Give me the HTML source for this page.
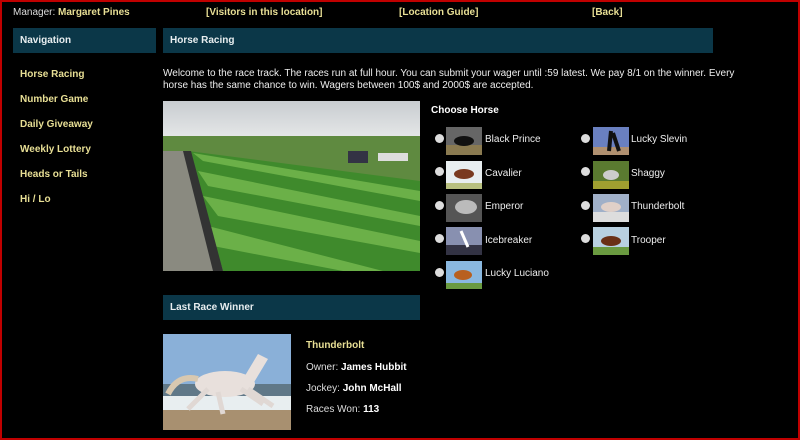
<!DOCTYPE html>
<html><head><style>
body{margin:0;width:800px;height:440px;background:#000;overflow:hidden;font-family:"Liberation Sans",Arial,sans-serif;font-size:10px;color:#ddd}
.frame{position:absolute;left:0;top:0;width:796px;height:436px;border:2px solid #c00000}
.a{position:absolute;white-space:nowrap}
.y{color:#e8df95;font-weight:bold}
.b{font-weight:bold;color:#fff}
.hdr{position:absolute;background:#0b3748;color:#e8eef0;font-weight:bold;font-size:10px;padding-left:7px;box-sizing:border-box;line-height:25px;height:25px}
.r{position:absolute;width:9px;height:9px;border-radius:50%;background:#ddd}
.t{position:absolute;width:36px;height:28px}
</style></head><body>
<div class="frame"></div>
<div class="a" style="left:13px;top:7px">Manager: <span class="y">Margaret Pines</span></div>
<div class="a y" style="left:206px;top:7px">[Visitors in this location]</div>
<div class="a y" style="left:399px;top:7px">[Location Guide]</div>
<div class="a y" style="left:592px;top:7px">[Back]</div>
<div class="hdr" style="left:13px;top:28px;width:143px">Navigation</div>
<div class="hdr" style="left:163px;top:28px;width:550px">Horse Racing</div>
<div class="a y" style="left:20px;top:69px">Horse Racing</div>
<div class="a y" style="left:20px;top:94px">Number Game</div>
<div class="a y" style="left:20px;top:119px">Daily Giveaway</div>
<div class="a y" style="left:20px;top:144px">Weekly Lottery</div>
<div class="a y" style="left:20px;top:169px">Heads or Tails</div>
<div class="a y" style="left:20px;top:194px">Hi / Lo</div>
<div class="a" style="left:163px;top:68px;line-height:12px;color:#eee">Welcome to the race track. The races run at full hour. You can submit your wager until :59 latest. We pay 8/1 on the winner. Every<br>horse has the same chance to win. Wagers between 100$ and 2000$ are accepted.</div>
<svg class="a" style="left:163px;top:101px" width="257" height="170">
<defs><linearGradient id="sk" x1="0" y1="0" x2="0" y2="1"><stop offset="0" stop-color="#c8ccd0"/><stop offset="1" stop-color="#e8eaea"/></linearGradient></defs>
<rect width="257" height="40" fill="url(#sk)"/>
<rect y="35" width="257" height="135" fill="#5f8a40"/>
<path d="M25 50 L257 80 L257 170 L60 170 Z" fill="#3f8a2c"/>
<path d="M30 52 L257 90 L257 100 L40 60 Z M35 70 L257 115 L257 125 L45 85 Z M40 95 L257 140 L257 152 L55 115 Z M45 125 L220 170 L180 170 L50 145 Z" fill="#6bb048"/>
<path d="M0 50 L25 50 L60 170 L0 170 Z" fill="#8a8a80"/>
<path d="M20 50 L28 50 L60 170 L50 170 Z" fill="#333"/>
<rect x="185" y="50" width="20" height="12" fill="#334"/><rect x="215" y="52" width="30" height="8" fill="#ddd"/>
</svg>
<div class="a b" style="left:431px;top:105px">Choose Horse</div>
<div class="r" style="left:435px;top:134px"></div><svg class="t" style="left:446px;top:127px"><rect width="36" height="28" fill="#8a7a50"/><rect width="36" height="18" fill="#666"/><ellipse cx="18" cy="14" rx="10" ry="5" fill="#111"/></svg><div class="a" style="left:485px;top:134px;color:#eee">Black Prince</div>
<div class="r" style="left:435px;top:167px"></div><svg class="t" style="left:446px;top:161px"><rect width="36" height="28" fill="#e8eef0"/><rect y="22" width="36" height="6" fill="#b8c080"/><ellipse cx="18" cy="13" rx="10" ry="5" fill="#7a3a20"/></svg><div class="a" style="left:485px;top:168px;color:#eee">Cavalier</div>
<div class="r" style="left:435px;top:201px"></div><svg class="t" style="left:446px;top:194px"><rect width="36" height="28" fill="#555"/><ellipse cx="20" cy="13" rx="11" ry="7" fill="#bbb"/></svg><div class="a" style="left:485px;top:201px;color:#eee">Emperor</div>
<div class="r" style="left:435px;top:234px"></div><svg class="t" style="left:446px;top:227px"><rect width="36" height="28" fill="#8890b0"/><rect y="18" width="36" height="10" fill="#334"/><path d="M15 4 L22 20" stroke="#fff" stroke-width="3"/></svg><div class="a" style="left:485px;top:235px;color:#eee">Icebreaker</div>
<div class="r" style="left:435px;top:268px"></div><svg class="t" style="left:446px;top:261px"><rect width="36" height="28" fill="#8ab8e0"/><rect y="22" width="36" height="6" fill="#6a9a40"/><ellipse cx="17" cy="14" rx="9" ry="5" fill="#b86020"/></svg><div class="a" style="left:485px;top:268px;color:#eee">Lucky Luciano</div>
<div class="r" style="left:581px;top:134px"></div><svg class="t" style="left:593px;top:127px"><rect width="36" height="28" fill="#6a80c0"/><rect y="20" width="36" height="8" fill="#b09070"/><path d="M18 4 L16 24 M20 6 L26 24" stroke="#111" stroke-width="4"/></svg><div class="a" style="left:631px;top:134px;color:#eee">Lucky Slevin</div>
<div class="r" style="left:581px;top:167px"></div><svg class="t" style="left:593px;top:161px"><rect width="36" height="28" fill="#5a7a30"/><rect y="20" width="36" height="8" fill="#a0a030"/><ellipse cx="18" cy="14" rx="8" ry="5" fill="#ccc"/></svg><div class="a" style="left:631px;top:168px;color:#eee">Shaggy</div>
<div class="r" style="left:581px;top:201px"></div><svg class="t" style="left:593px;top:194px"><rect width="36" height="28" fill="#a0b0c8"/><rect y="18" width="36" height="10" fill="#ddd"/><ellipse cx="18" cy="13" rx="10" ry="5" fill="#e0d0c8"/></svg><div class="a" style="left:631px;top:201px;color:#eee">Thunderbolt</div>
<div class="r" style="left:581px;top:234px"></div><svg class="t" style="left:593px;top:227px"><rect width="36" height="28" fill="#b8d0e0"/><rect y="20" width="36" height="8" fill="#6a9a40"/><ellipse cx="18" cy="14" rx="10" ry="5" fill="#6a3015"/></svg><div class="a" style="left:631px;top:235px;color:#eee">Trooper</div>
<div class="hdr" style="left:163px;top:295px;width:257px">Last Race Winner</div>
<svg class="a" style="left:163px;top:334px" width="128" height="96">
<rect width="128" height="50" fill="#8ab0d8"/><rect y="50" width="128" height="20" fill="#607888"/><rect y="62" width="128" height="14" fill="#e8eef0"/><rect y="76" width="128" height="20" fill="#a89070"/>
<ellipse cx="62" cy="50" rx="30" ry="13" fill="#e8e0dc"/><path d="M80 45 L95 20 L105 25 L90 50 Z" fill="#e8e0dc"/><path d="M45 55 L25 75 M55 58 L60 80 M78 55 L100 70 M85 55 L110 72" stroke="#e0d8d4" stroke-width="5"/><path d="M35 45 Q15 40 5 60" stroke="#d8c8b0" stroke-width="6" fill="none"/>
</svg>
<div class="a y" style="left:306px;top:340px">Thunderbolt</div>
<div class="a" style="left:306px;top:362px;color:#ddd">Owner: <span class="b">James Hubbit</span></div>
<div class="a" style="left:306px;top:383px;color:#ddd">Jockey: <span class="b">John McHall</span></div>
<div class="a" style="left:306px;top:404px;color:#ddd">Races Won: <span class="b">113</span></div>
</body></html>
